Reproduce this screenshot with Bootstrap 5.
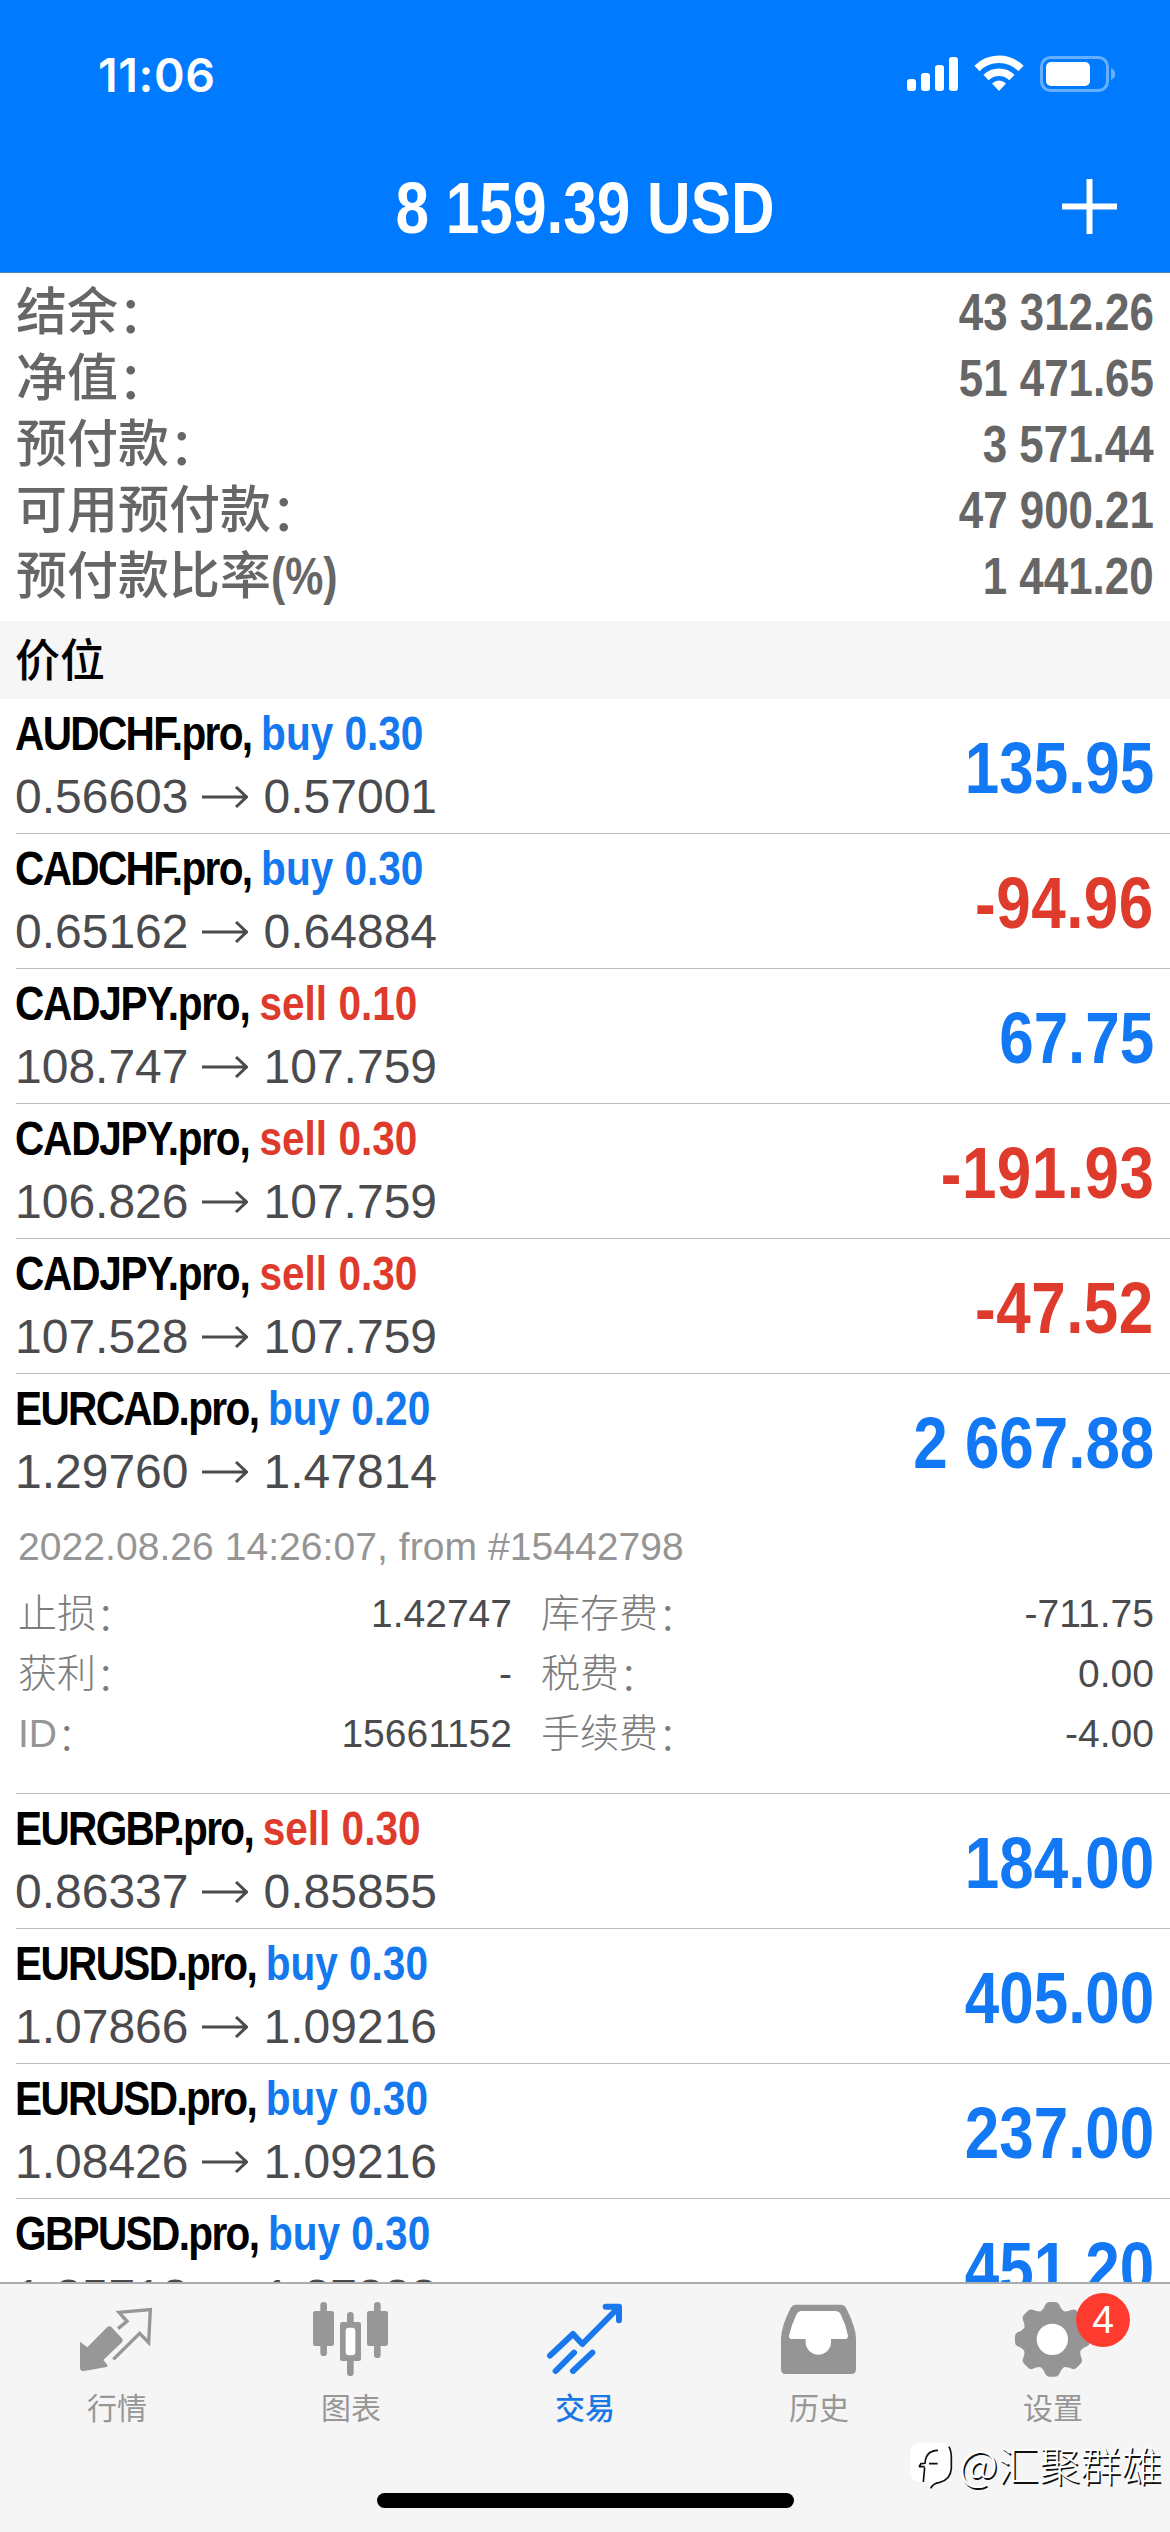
<!DOCTYPE html>
<html lang="zh-CN">
<head>
<meta charset="utf-8">
<meta name="viewport" content="width=device-width, initial-scale=1">
<title>交易</title>
<link href="https://cdn.jsdelivr.net/npm/bootstrap@5.3.0/dist/css/bootstrap.min.css" rel="stylesheet">
<style>
  body { font-family: "Liberation Sans", "Noto Sans CJK SC", sans-serif; background: #fff; color: #000; }
  .screen { width: 1170px; height: 2532px; overflow: hidden; }
  .topbar { height: 273px; background: #007aff; color: #fff; border-bottom: 1px solid #4a87c4; }
  .status { height: 150px; padding: 0 55px 0 98px; }
  .clock { font: 600 46.5px/60px Inter, sans-serif; letter-spacing: .6px; }
  .titlebar { height: 114px; }
  .title-text { font-size: 72px; font-weight: 700; line-height: 116px; transform: scaleX(.838); transform-origin: center; }
  .plus-btn { right: 53px; top: 29px; }
  .summary { padding: 7px 16px 11px; color: #666; }
  .sum-row { height: 66px; line-height: 66px; font-size: 51px; }
  .sum-label { font-weight: 500; }
  .sum-pct { display: inline-block; font-weight: 700; transform: scaleX(.84); transform-origin: left; }
  .sum-value { font-weight: 700; transform: scaleX(.86); transform-origin: right; }
  .raise { position: relative; top: 3px; }
  .section-head { height: 78px; line-height: 81px; padding-left: 15px; background: #f6f6f7; font-size: 45px; font-weight: 500; }
  .list-area { min-height: 0; overflow: hidden; }
  .deals { margin-left: 16px; }
  .deal { border-bottom: 1px solid #bcbcbe; height: 135px; padding-right: 16px; }
  .deal.open { height: 420px; }
  .deal-main { height: 134px; padding-top: 3px; }
  .symbol { font-size: 48px; line-height: 64px; font-weight: 700; transform: scaleX(.845); transform-origin: left; white-space: nowrap; margin-left: -1px; }
  .symbol b { letter-spacing: -1.95px; }
  .symbol b.jpy { letter-spacing: -1.45px; }
  .buy { color: #1478ee; }
  .sell { color: #df3b2d; }
  .prices { font-size: 48px; line-height: 62px; color: #4b4b4e; white-space: nowrap; margin-left: -1px; }
  .prices svg { margin: 0 16px 0 13px; position: relative; top: -3px; }
  .profit { font-size: 72px; line-height: 131px; font-weight: 700; transform: scaleX(.86); transform-origin: right; white-space: nowrap; margin-top: 1px; }
  .up { color: #1278f3; }
  .down { color: #df3b2d; letter-spacing: .6px; }
  .note-line { font-size: 39px; line-height: 60px; color: #959595; margin: 9px 0 7px 2px; letter-spacing: .06px; }
  .detail { font-size: 39px; line-height: 60px; color: #959595; }
  .detail .val { color: #4b4b4e; }
  .col-l { width: 496px; padding-left: 2px; }
  .col-r { padding-left: 29px; }
  .thin { font-weight: 300; color: #7c7c7c; }
  .tabs { height: 250px; background: #f5f5f5; border-top: 2px solid #acacac; }
  .tab { color: #979797; font-size: 30px; line-height: 36px; padding-top: 17px; }
  .tab svg { width: 76px; height: 76px; display: block; margin-bottom: 14px; }
  .tab.active { color: #1a78e6; }
  .count { left: 140px; top: 9px; width: 54px; height: 54px; border-radius: 50%; background: #ff3b2f; color: #fff; font-size: 39px; line-height: 54px; }
  .home-line { left: 377px; bottom: 24px; width: 417px; height: 15px; border-radius: 8px; background: #000; }
  .sign { right: 8px; bottom: 39px; font: 300 41px/60px "Noto Sans CJK SC", sans-serif; color: #fff; text-shadow: 1.5px 1.5px 0 #111; white-space: nowrap; }
  .sign .at { font-size: 43px; }
</style>
</head>
<body>
<div class="screen d-flex flex-column">
  <header class="topbar flex-shrink-0">
    <div class="status d-flex align-items-center justify-content-between">
      <span class="clock">11:06</span>
      <svg width="212" height="40" viewBox="903 55 212 40" fill="#fff">
        <rect x="907" y="79" width="9" height="12" rx="3"/><rect x="921" y="73" width="9" height="18" rx="3"/><rect x="935" y="65" width="9" height="26" rx="3"/><rect x="949" y="57" width="9" height="34" rx="3"/>
        <g fill="none" stroke="#fff" stroke-width="7.5"><path d="M977 68.500A31 31 0 0 1 1021 68.500"/><path d="M986 77.500A18.500 18.500 0 0 1 1012 77.500"/></g>
        <path d="M992 83.500Q999 77.500 1006 83.500L999 91Z"/>
        <rect x="1041.500" y="57.500" width="66" height="33" rx="9" fill="none" stroke="#66afff" stroke-width="3"/>
        <rect x="1046" y="62" width="44" height="24" rx="5"/><path d="M1111 68Q1115.500 70.500 1115.500 74T1111 80Z" fill="#66afff"/>
      </svg>
    </div>
    <div class="titlebar position-relative text-center">
      <div class="title-text">8 159.39 USD</div>
      <svg class="plus-btn position-absolute" width="55" height="55" viewBox="0 0 55 55"><path d="M27.500 0V55M0 27.500H55" stroke="#fff" stroke-width="6"/></svg>
    </div>
  </header>

  <section class="summary flex-shrink-0">
    <div class="sum-row d-flex justify-content-between"><span class="sum-label">结余<span class="raise">：</span></span><span class="sum-value">43 312.26</span></div>
    <div class="sum-row d-flex justify-content-between"><span class="sum-label">净值<span class="raise">：</span></span><span class="sum-value">51 471.65</span></div>
    <div class="sum-row d-flex justify-content-between"><span class="sum-label">预付款<span class="raise">：</span></span><span class="sum-value">3 571.44</span></div>
    <div class="sum-row d-flex justify-content-between"><span class="sum-label">可用预付款<span class="raise">：</span></span><span class="sum-value">47 900.21</span></div>
    <div class="sum-row d-flex justify-content-between"><span class="sum-label">预付款比率<span class="sum-pct">(%)</span></span><span class="sum-value">1 441.20</span></div>
  </section>
  <div class="section-head flex-shrink-0">价位</div>

  <svg class="d-none"><symbol id="arrow" viewBox="0 0 46 24"><path d="M0 12H44M34 2L44.500 12L34 22" fill="none" stroke="#4b4b4e" stroke-width="3"/></symbol></svg>
  <main class="list-area flex-fill"><div class="deals">
    <div class="deal"><div class="deal-main d-flex justify-content-between"><div><div class="symbol"><b>AUDCHF.pro, </b><span class="buy">buy 0.30</span></div><div class="prices">0.56603<svg width="46" height="24"><use href="#arrow"/></svg>0.57001</div></div><div class="profit up">135.95</div></div></div>
    <div class="deal"><div class="deal-main d-flex justify-content-between"><div><div class="symbol"><b>CADCHF.pro, </b><span class="buy">buy 0.30</span></div><div class="prices">0.65162<svg width="46" height="24"><use href="#arrow"/></svg>0.64884</div></div><div class="profit down">-94.96</div></div></div>
    <div class="deal"><div class="deal-main d-flex justify-content-between"><div><div class="symbol"><b class="jpy">CADJPY.pro, </b><span class="sell">sell 0.10</span></div><div class="prices">108.747<svg width="46" height="24"><use href="#arrow"/></svg>107.759</div></div><div class="profit up">67.75</div></div></div>
    <div class="deal"><div class="deal-main d-flex justify-content-between"><div><div class="symbol"><b class="jpy">CADJPY.pro, </b><span class="sell">sell 0.30</span></div><div class="prices">106.826<svg width="46" height="24"><use href="#arrow"/></svg>107.759</div></div><div class="profit down">-191.93</div></div></div>
    <div class="deal"><div class="deal-main d-flex justify-content-between"><div><div class="symbol"><b class="jpy">CADJPY.pro, </b><span class="sell">sell 0.30</span></div><div class="prices">107.528<svg width="46" height="24"><use href="#arrow"/></svg>107.759</div></div><div class="profit down">-47.52</div></div></div>
    <div class="deal open"><div class="deal-main d-flex justify-content-between"><div><div class="symbol"><b>EURCAD.pro, </b><span class="buy">buy 0.20</span></div><div class="prices">1.29760<svg width="46" height="24"><use href="#arrow"/></svg>1.47814</div></div><div class="profit up">2 667.88</div></div>
      <div class="note-line">2022.08.26 14:26:07, from #15442798</div>
      <div class="detail d-flex"><div class="col-l d-flex justify-content-between"><span class="thin">止损<span class="raise">：</span></span><span class="val">1.42747</span></div><div class="col-r flex-fill d-flex justify-content-between"><span class="thin">库存费<span class="raise">：</span></span><span class="val">-711.75</span></div></div>
      <div class="detail d-flex"><div class="col-l d-flex justify-content-between"><span class="thin">获利<span class="raise">：</span></span><span class="val">-</span></div><div class="col-r flex-fill d-flex justify-content-between"><span class="thin">税费<span class="raise">：</span></span><span class="val">0.00</span></div></div>
      <div class="detail d-flex"><div class="col-l d-flex justify-content-between"><span>ID<span class="raise thin">：</span></span><span class="val">15661152</span></div><div class="col-r flex-fill d-flex justify-content-between"><span class="thin">手续费<span class="raise">：</span></span><span class="val">-4.00</span></div></div>
    </div>
    <div class="deal"><div class="deal-main d-flex justify-content-between"><div><div class="symbol"><b>EURGBP.pro, </b><span class="sell">sell 0.30</span></div><div class="prices">0.86337<svg width="46" height="24"><use href="#arrow"/></svg>0.85855</div></div><div class="profit up">184.00</div></div></div>
    <div class="deal"><div class="deal-main d-flex justify-content-between"><div><div class="symbol"><b>EURUSD.pro, </b><span class="buy">buy 0.30</span></div><div class="prices">1.07866<svg width="46" height="24"><use href="#arrow"/></svg>1.09216</div></div><div class="profit up">405.00</div></div></div>
    <div class="deal"><div class="deal-main d-flex justify-content-between"><div><div class="symbol"><b>EURUSD.pro, </b><span class="buy">buy 0.30</span></div><div class="prices">1.08426<svg width="46" height="24"><use href="#arrow"/></svg>1.09216</div></div><div class="profit up">237.00</div></div></div>
    <div class="deal"><div class="deal-main d-flex justify-content-between"><div><div class="symbol"><b>GBPUSD.pro, </b><span class="buy">buy 0.30</span></div><div class="prices">1.25718<svg width="46" height="24"><use href="#arrow"/></svg>1.27222</div></div><div class="profit up">451.20</div></div></div>
  </div></main>

  <nav class="tabs position-relative flex-shrink-0">
    <div class="d-flex">
      <div class="tab col d-flex flex-column align-items-center">
        <svg viewBox="57 33 228 228"><path fill="#979797" d="M60 155L82 172L142 111Q148 106 154 111L187 146Q190 151 186 157L130 210L142 224Q144 230 136 232L72 243Q60 243 60 233Z"/><path fill="none" stroke="#979797" stroke-width="10" d="M174 116L201 94L177 67L271 59L266 158L239 130L160 208"/></svg>行情
      </div>
      <div class="tab col d-flex flex-column align-items-center">
        <svg viewBox="759 33 228 228"><g stroke="#979797" stroke-width="20" stroke-linecap="round"><path d="M791 46V188M952 46V194M871 76V248"/></g><g fill="#979797"><rect x="759" y="63" width="63" height="105" rx="7"/><rect x="921" y="63" width="63" height="105" rx="7"/><rect x="840" y="96" width="63" height="117" rx="7"/></g><rect x="857" y="113" width="29" height="83" rx="10" fill="#fff"/></svg>图表
      </div>
      <div class="tab active col d-flex flex-column align-items-center">
        <svg viewBox="51 33 228 228"><g fill="none" stroke="#1978ec" stroke-width="18" stroke-linecap="round" stroke-linejoin="round"><path d="M60 197L129 132L157 162L264 54"/><path d="M227 50H267V91" /><path d="M77 243L132 188M129 243L187 188"/></g></svg><span class="fw-medium">交易</span>
      </div>
      <div class="tab col d-flex flex-column align-items-center">
        <svg viewBox="753 33 228 228"><path fill="#959595" d="M798 44H932Q943 44 948 53Q978 112 978 146V238Q978 252 964 252H767Q753 252 753 238V146Q755 105 782 54Q787 44 798 44Z"/><path fill="#fff" d="M815 63H915Q927 63 932 73Q948 105 954 137Q954 147 944 147H903V156A38 38 0 0 1 827 156V147H787Q776 147 777 137Q784 105 800 72Q805 63 815 63Z"/></svg>历史
      </div>
      <div class="tab col d-flex flex-column align-items-center position-relative">
        <svg viewBox="75 33 228 228"><g transform="translate(187 148)"><g fill="#959595"><circle r="91"/><g id="tooth"><path id="t" d="M-34 -84Q-25 -92 -21 -104Q-18 -112 -9 -112H9Q18 -112 21 -104Q25 -92 34 -84L0 0Z"/><use href="#t" transform="rotate(90)"/></g><use href="#tooth" transform="rotate(45)"/><use href="#tooth" transform="rotate(180)"/><use href="#tooth" transform="rotate(225)"/></g><circle r="47" fill="#fff"/></g></svg>设置
        <span class="count position-absolute text-center">4</span>
      </div>
    </div>
    <div class="home-line position-absolute"></div>
    <div class="sign position-absolute d-flex align-items-center">
      <svg width="50" height="54" viewBox="50 30 150 162" fill="none"><path d="M88 50H142Q176 50 176 88V136Q176 168 142 170L116 188L110 168H88Q54 168 54 134V86Q54 50 88 50Z" fill="#fff"/><path d="M170 62Q178 78 177 100V128Q174 162 142 169Q122 172 115 187M80 122L86 113L98 112Q100 74 137 73M80 122H97M97 124L93 168M110 113H136" stroke="#111" stroke-width="5"/></svg><span><span class="at">@</span>汇聚群雄</span>
    </div>
  </nav>
</div>
<script src="https://cdn.jsdelivr.net/npm/bootstrap@5.3.0/dist/js/bootstrap.bundle.min.js"></script>
</body>
</html>
